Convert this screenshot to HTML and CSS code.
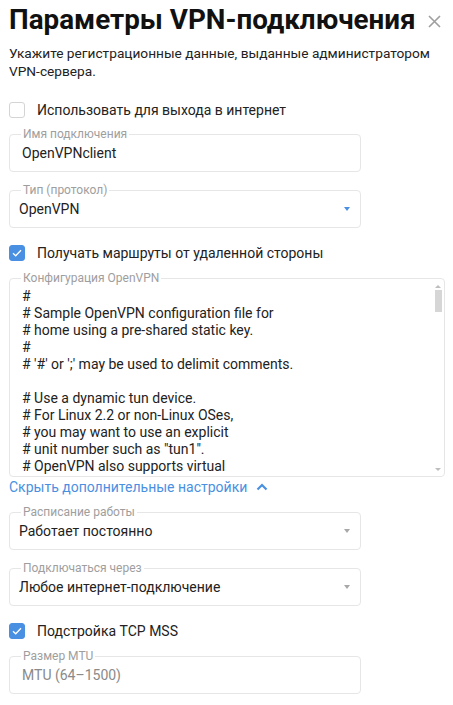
FILE: index.html
```html
<!DOCTYPE html>
<html lang="ru">
<head>
    <meta charset="UTF-8">
    <meta name="viewport" content="width=device-width, initial-scale=1.0">
    <title>Параметры VPN-подключения</title>
    <link rel="stylesheet" href="styles.css">
</head>
<body>
    <div class="dialog">
        <div class="dialog-header">
            <h1>Параметры VPN-подключения</h1>
            <button class="close-button" aria-label="Закрыть">
                <svg width="13" height="13" viewBox="0 0 13 13"><path d="M1 1L12 12M12 1L1 12" stroke="#9e9e9e" stroke-width="1.6" fill="none"/></svg>
            </button>
        </div>
        <p class="hint">Укажите регистрационные данные, выданные администратором VPN-сервера.</p>

        <label class="check-row first">
            <span class="checkbox"></span>
            <span>Использовать для выхода в интернет</span>
        </label>

        <fieldset class="field">
            <legend>Имя подключения</legend>
            <div class="value">OpenVPNclient</div>
        </fieldset>

        <fieldset class="field">
            <legend>Тип (протокол)</legend>
            <div class="value select">OpenVPN<span class="arrow active"></span></div>
        </fieldset>

        <label class="check-row">
            <span class="checkbox checked">
                <svg width="10" height="8" viewBox="0 0 10 8"><path d="M1 4.2L3.7 6.8L9 1.3" stroke="#fff" stroke-width="1.3" fill="none"/></svg>
            </span>
            <span>Получать маршруты от удаленной стороны</span>
        </label>

        <fieldset class="field config">
            <legend>Конфигурация OpenVPN</legend>
            <div class="config-body">
                <div class="config-text">#
# Sample OpenVPN configuration file for
# home using a pre-shared static key.
#
# '#' or ';' may be used to delimit comments.

# Use a dynamic tun device.
# For Linux 2.2 or non-Linux OSes,
# you may want to use an explicit
# unit number such as "tun1".
# OpenVPN also supports virtual</div>
                <div class="scrollbar">
                    <span class="scroll-up"></span>
                    <span class="scroll-thumb"></span>
                    <span class="scroll-down"></span>
                </div>
            </div>
        </fieldset>

        <a class="toggle-link" href="#">Скрыть дополнительные настройки
            <svg width="12" height="8" viewBox="0 0 12 8"><path d="M1.5 6.5L6 2L10.5 6.5" stroke="#4a90e2" stroke-width="2.2" fill="none"/></svg>
        </a>

        <fieldset class="field">
            <legend>Расписание работы</legend>
            <div class="value select">Работает постоянно<span class="arrow"></span></div>
        </fieldset>

        <fieldset class="field">
            <legend>Подключаться через</legend>
            <div class="value select">Любое интернет-подключение<span class="arrow"></span></div>
        </fieldset>

        <label class="check-row">
            <span class="checkbox checked">
                <svg width="10" height="8" viewBox="0 0 10 8"><path d="M1 4.2L3.7 6.8L9 1.3" stroke="#fff" stroke-width="1.3" fill="none"/></svg>
            </span>
            <span>Подстройка TCP MSS</span>
        </label>

        <fieldset class="field">
            <legend>Размер MTU</legend>
            <div class="value placeholder">MTU (64–1500)</div>
        </fieldset>
    </div>
</body>
</html>
```

FILE: styles.css
```css
body {
    margin: 0;
    font-family: Roboto, "Noto Sans", Arial, sans-serif;
    color: #222;
    background-color: #ffffff;
}

.dialog {
    padding: 0 9px;
}

.dialog-header {
    display: flex;
    align-items: center;
    justify-content: space-between;
    margin-top: 3px;
}

h1 {
    margin: 0;
    font-size: 27.8px;
    line-height: 34px;
    font-weight: 700;
    color: #111;
    white-space: nowrap;
}

.close-button {
    background: none;
    border: none;
    padding: 0;
    margin: 3px 3px 0 0;
    width: 13px;
    height: 13px;
    display: flex;
    flex-shrink: 0;
    cursor: pointer;
}

.hint {
    margin: 7px 0 0;
    font-size: 13.7px;
    line-height: 18px;
}

/* Checkbox rows */
.check-row {
    display: flex;
    align-items: center;
    height: 20px;
    margin: 15px 0 8px;
    font-size: 14px;
    line-height: 20px;
    cursor: pointer;
}

.check-row.first {
    margin-top: 20px;
    margin-bottom: 7px;
}

.checkbox {
    width: 14px;
    height: 14px;
    border: 1px solid #d4d4d4;
    border-radius: 3px;
    margin-right: 12px;
    display: flex;
    justify-content: center;
    align-items: center;
    flex-shrink: 0;
}

.checkbox.checked {
    background-color: #4a90e2;
    border-color: #4a90e2;
}

/* Outlined fields */
.field {
    width: 352px;
    box-sizing: border-box;
    margin: 0 0 11px;
    padding: 2px 11px 8px;
    border: 1px solid #e6e6e6;
    border-radius: 4px;
    min-width: 0;
}

.field legend {
    padding: 0 2px;
    font-size: 12px;
    line-height: 14px;
    color: #9e9e9e;
}

.value {
    font-size: 14px;
    line-height: 20px;
    padding-left: 1px;
}

.value.select {
    position: relative;
    padding-left: 0;
    margin-left: -2px;
}

.value.placeholder {
    color: #8a8a8a;
}

.arrow {
    position: absolute;
    right: -1px;
    top: 8px;
    border-left: 3.5px solid transparent;
    border-right: 3.5px solid transparent;
    border-top: 4px solid #a8a8a8;
}

.arrow.active {
    border-top-color: #4a90e2;
}

/* Configuration text */
.field.config {
    width: 436px;
    margin-bottom: 0;
    padding: 0 0 0 11px;
}

.config-body {
    position: relative;
    height: 191px;
    overflow: hidden;
}

.config-text {
    padding-top: 3px;
    padding-left: 1px;
    font-size: 14px;
    line-height: 17px;
    white-space: pre;
}

.scrollbar {
    position: absolute;
    top: 0;
    right: 2px;
    width: 7px;
    height: 100%;
    background-color: #ffffff;
}

.scroll-up,
.scroll-down {
    position: absolute;
    left: 0;
    border-left: 3.5px solid transparent;
    border-right: 3.5px solid transparent;
}

.scroll-up {
    top: 0;
    border-bottom: 3px solid #bdbdbd;
}

.scroll-down {
    bottom: 5px;
    border-top: 3px solid #bdbdbd;
}

.scroll-thumb {
    position: absolute;
    top: 5px;
    left: 0;
    width: 7px;
    height: 22px;
    background-color: #d6d6d6;
}

.toggle-link {
    display: inline-flex;
    align-items: center;
    gap: 9px;
    height: 20px;
    margin-bottom: 8px;
    font-size: 14px;
    line-height: 20px;
    color: #4a90e2;
    text-decoration: none;
}
```
